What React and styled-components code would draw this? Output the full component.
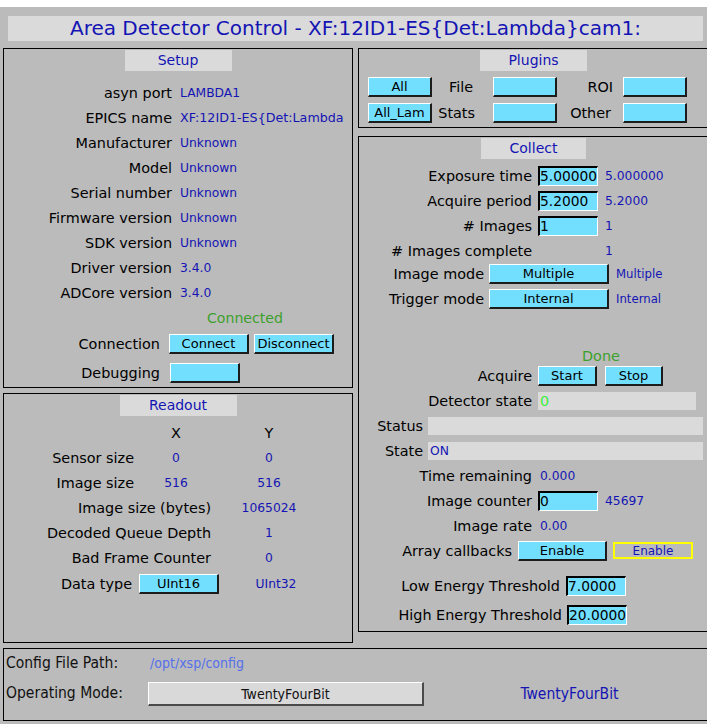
import React from 'react';
import styled, { createGlobalStyle } from 'styled-components';

const BLUE = '#1414b4';
const CYAN = '#73dfff';
const LIGHT = '#dadada';

const GlobalStyle = createGlobalStyle`
  html, body {
    margin: 0;
    background: #ffffff;
  }
`;

const Screen = styled.div`
  margin-top: 7px;
  height: 717px;
  padding-top: 9px;
  box-sizing: border-box;
  background: #bbbbbb;
  overflow: hidden;
  font-family: 'DejaVu Sans', 'Liberation Sans', sans-serif;
  color: #000;
`;

const TitleBar = styled.div`
  margin-left: 8px;
  width: 695px;
  height: 25px;
  background: ${LIGHT};
  color: ${BLUE};
  font-size: 20px;
  line-height: 25px;
  text-align: center;
  white-space: nowrap;
`;

const Main = styled.div`
  display: flex;
  align-items: flex-start;
  gap: 5px;
  margin: 7px 0 0 3px;
`;

const Column = styled.div`
  display: flex;
  flex-direction: column;
  flex: none;
  width: ${p => p.$w}px;
  gap: ${p => p.$gap}px;
`;

const Panel = styled.div`
  box-sizing: border-box;
  border: 1px solid #000;
  height: ${p => p.$h}px;
  flex: none;
`;

const PanelTitle = styled.div`
  width: ${p => p.$w}px;
  height: ${p => p.$h || 21}px;
  margin: 1px auto 0;
  background: ${LIGHT};
  color: ${BLUE};
  font-size: 14px;
  line-height: ${p => p.$h || 21}px;
  text-align: center;
`;

const Line = styled.div`
  display: flex;
  align-items: center;
  height: ${p => p.$h || 25}px;
  margin-top: ${p => p.$mt || 0}px;
  gap: ${p => p.$gap ?? 6}px;
`;

const Label = styled.div`
  flex: none;
  width: ${p => p.$w}px;
  text-align: right;
  font-size: 14.4px;
  white-space: nowrap;
`;

const Value = styled.div`
  flex: none;
  margin-left: ${p => p.$ml || 0}px;
  font-size: ${p => p.$size || 12.3}px;
  color: ${p => p.$color || BLUE};
  white-space: nowrap;
`;

const Button = styled.button`
  flex: none;
  box-sizing: border-box;
  width: ${p => p.$w}px;
  height: ${p => p.$h || 20}px;
  margin: 0 0 0 ${p => p.$ml || 0}px;
  padding: 0;
  background: ${CYAN};
  border-style: solid;
  border-width: 1px 2px 2px 1px;
  border-color: #ffffff #1c1c1c #1c1c1c #ffffff;
  font-family: inherit;
  font-size: 13px;
  color: #000;
  white-space: nowrap;
  justify-self: ${p => (p.$ml ? 'start' : 'center')};
`;

const Entry = styled.div`
  flex: none;
  box-sizing: border-box;
  width: ${p => p.$w || 60}px;
  height: 20px;
  background: ${CYAN};
  border-style: solid;
  border-width: 2px 1px 1px 2px;
  border-color: #000 #ffffff #ffffff #000;
  font-size: 13.8px;
  line-height: 17px;
  overflow: hidden;
  white-space: nowrap;
`;

const Readback = styled.div`
  flex: none;
  box-sizing: border-box;
  width: ${p => p.$w}px;
  height: 18px;
  padding-left: 2px;
  background: ${LIGHT};
  color: ${p => p.$color || BLUE};
  font-size: ${p => p.$size || 12.3}px;
  line-height: 18px;
`;

const AlarmBox = styled.div`
  flex: none;
  box-sizing: border-box;
  width: 80px;
  height: 17px;
  border: 2px solid #ffff00;
  color: ${BLUE};
  font-size: 12px;
  line-height: 14px;
  text-align: center;
`;

const PluginGrid = styled.div`
  display: grid;
  grid-template-columns: 64px 61px 64px 66px 64px;
  grid-auto-rows: 20px;
  row-gap: 6px;
  align-items: center;
  margin: 6px 0 0 9px;
`;

const GridLabel = styled.div`
  grid-column: span ${p => p.$span || 1};
  text-align: ${p => p.$align || 'right'};
  padding-right: ${p => p.$pr || 0}px;
  padding-left: ${p => p.$pl || 0}px;
  font-size: 14.4px;
  white-space: nowrap;
`;

const ReadoutGrid = styled.div`
  display: grid;
  grid-template-columns: 137px 70px 116px;
  grid-template-rows: repeat(6, 25px) 28px;
  align-items: center;
  margin-top: 4px;
`;

const GridValue = styled.div`
  text-align: center;
  padding-left: ${p => p.$pl || 0}px;
  font-size: 12.3px;
  color: ${BLUE};
  white-space: nowrap;
`;

const BottomPanel = styled(Panel)`
  width: 720px;
  margin: 5px 0 0 3px;
`;

const BottomGrid = styled.div`
  display: grid;
  grid-template-columns: 144px 276px 291px;
  grid-template-rows: 27px 24px;
  row-gap: 6px;
  align-items: center;
  font-family: 'DejaVu Sans Condensed', 'DejaVu Sans', sans-serif;
`;

const CondLabel = styled.div`
  padding: 0 0 ${p => p.$pb || 0}px 2px;
  font-size: 15.5px;
  color: #111;
  white-space: nowrap;
`;

const PathText = styled.div`
  padding-left: 2px;
  font-size: 14px;
  color: #5670ea;
`;

const MenuButton = styled.button`
  box-sizing: border-box;
  width: 276px;
  height: 24px;
  padding: 0;
  background: #d9d9d9;
  border-style: solid;
  border-width: 1px 2px 2px 1px;
  border-color: #ffffff #4a4a4a #4a4a4a #ffffff;
  font-family: inherit;
  font-size: 14px;
  color: #111;
`;

const ModeText = styled.div`
  text-align: center;
  font-size: 15.5px;
  color: ${BLUE};
`;

const setupInfo = [
  ['asyn port', 'LAMBDA1'],
  ['EPICS name', 'XF:12ID1-ES{Det:Lambda', 12.7],
  ['Manufacturer', 'Unknown'],
  ['Model', 'Unknown'],
  ['Serial number', 'Unknown'],
  ['Firmware version', 'Unknown'],
  ['SDK version', 'Unknown'],
  ['Driver version', '3.4.0'],
  ['ADCore version', '3.4.0'],
];

const entryRows = [
  ['Exposure time', '5.00000', '5.000000'],
  ['Acquire period', '5.2000', '5.2000'],
  ['# Images', '1', '1'],
];

export default function App() {
  return (
    <>
      <GlobalStyle />
      <Screen>
        <TitleBar>Area Detector Control - XF:12ID1-ES{'{'}Det:Lambda{'}'}cam1:</TitleBar>

        <Main>
          <Column $w={350} $gap={5}>
            <Panel $h={340}>
              <PanelTitle $w={107}>Setup</PanelTitle>
              <div style={{ marginTop: 9 }}>
                {setupInfo.map(([label, value, size]) => (
                  <Line key={label} $gap={8}>
                    <Label $w={168}>{label}</Label>
                    <Value $size={size}>{value}</Value>
                  </Line>
                ))}
              </div>
              <Line>
                <Value $ml={203} $size={14.1} $color="#3ca02c">Connected</Value>
              </Line>
              <Line $h={20} $mt={4} $gap={5}>
                <Label $w={156}>Connection</Label>
                <Button $w={80} $ml={4}>Connect</Button>
                <Button $w={80}>Disconnect</Button>
              </Line>
              <Line $h={20} $mt={9} $gap={10}>
                <Label $w={156}>Debugging</Label>
                <Button $w={70} />
              </Line>
            </Panel>

            <Panel $h={250}>
              <PanelTitle $w={117}>Readout</PanelTitle>
              <ReadoutGrid>
                <div />
                <GridLabel $align="center">X</GridLabel>
                <GridLabel $align="center">Y</GridLabel>

                <GridLabel $pr={7}>Sensor size</GridLabel>
                <GridValue>0</GridValue>
                <GridValue>0</GridValue>

                <GridLabel $pr={7}>Image size</GridLabel>
                <GridValue>516</GridValue>
                <GridValue>516</GridValue>

                <GridLabel $span={2}>Image size (bytes)</GridLabel>
                <GridValue>1065024</GridValue>

                <GridLabel $span={2}>Decoded Queue Depth</GridLabel>
                <GridValue>1</GridValue>

                <GridLabel $span={2}>Bad Frame Counter</GridLabel>
                <GridValue>0</GridValue>

                <GridLabel $pr={9}>Data type</GridLabel>
                <Button $w={80} $ml={-2}>UInt16</Button>
                <GridValue $pl={14}>UInt32</GridValue>
              </ReadoutGrid>
            </Panel>
          </Column>

          <Column $w={351} $gap={8}>
            <Panel $h={80}>
              <PanelTitle $w={107}>Plugins</PanelTitle>
              <PluginGrid>
                <Button $w={64}>All</Button>
                <GridLabel $pr={20}>File</GridLabel>
                <Button $w={64} />
                <GridLabel $pr={10}>ROI</GridLabel>
                <Button $w={64} />

                <Button $w={64}>All_Lam</Button>
                <GridLabel $pr={18}>Stats</GridLabel>
                <Button $w={64} />
                <GridLabel $pr={12}>Other</GridLabel>
                <Button $w={64} />
              </PluginGrid>
            </Panel>

            <Panel $h={496}>
              <PanelTitle $w={105}>Collect</PanelTitle>
              <div style={{ marginTop: 4 }}>
                {entryRows.map(([label, set, rbv]) => (
                  <Line key={label}>
                    <Label $w={173}>{label}</Label>
                    <Entry>{set}</Entry>
                    <Value $ml={1}>{rbv}</Value>
                  </Line>
                ))}
              </div>
              <Line>
                <Label $w={173}># Images complete</Label>
                <Value $ml={67}>1</Value>
              </Line>
              <Line $h={20} $mt={1} $gap={5}>
                <Label $w={125}>Image mode</Label>
                <Button $w={120}>Multiple</Button>
                <Value $ml={2} $size={11.7}>Multiple</Value>
              </Line>
              <Line $h={20} $mt={5} $gap={5}>
                <Label $w={125}>Trigger mode</Label>
                <Button $w={120}>Internal</Button>
                <Value $ml={2} $size={11.7}>Internal</Value>
              </Line>
              <Line $h={18} $mt={38}>
                <Value $ml={223} $size={14.4} $color="#3ca02c">Done</Value>
              </Line>
              <Line $h={20} $mt={1}>
                <Label $w={173}>Acquire</Label>
                <Button $w={59}>Start</Button>
                <Button $w={58} $ml={2}>Stop</Button>
              </Line>
              <Line $mt={2}>
                <Label $w={173}>Detector state</Label>
                <Readback $w={158} $color="#3cf03c" $size={14.4}>0</Readback>
              </Line>
              <Line $gap={5}>
                <Label $w={64}>Status</Label>
                <Readback $w={275} />
              </Line>
              <Line $gap={5}>
                <Label $w={64}>State</Label>
                <Readback $w={275}>ON</Readback>
              </Line>
              <Line>
                <Label $w={173}>Time remaining</Label>
                <Value $ml={2}>0.000</Value>
              </Line>
              <Line>
                <Label $w={173}>Image counter</Label>
                <Entry>0</Entry>
                <Value $ml={1}>45697</Value>
              </Line>
              <Line>
                <Label $w={173}>Image rate</Label>
                <Value $ml={2}>0.00</Value>
              </Line>
              <Line>
                <Label $w={153}>Array callbacks</Label>
                <Button $w={89}>Enable</Button>
                <AlarmBox>Enable</AlarmBox>
              </Line>
              <Line $mt={10}>
                <Label $w={201}>Low Energy Threshold</Label>
                <Entry>7.0000</Entry>
              </Line>
              <Line $mt={4} $gap={5}>
                <Label $w={203}>High Energy Threshold</Label>
                <Entry>20.0000</Entry>
              </Line>
            </Panel>
          </Column>
        </Main>

        <BottomPanel $h={73}>
          <BottomGrid>
            <CondLabel>Config File Path:</CondLabel>
            <PathText>/opt/xsp/config</PathText>
            <div />
            <CondLabel $pb={3}>Operating Mode:</CondLabel>
            <MenuButton>TwentyFourBit</MenuButton>
            <ModeText>TwentyFourBit</ModeText>
          </BottomGrid>
        </BottomPanel>
      </Screen>
    </>
  );
}
